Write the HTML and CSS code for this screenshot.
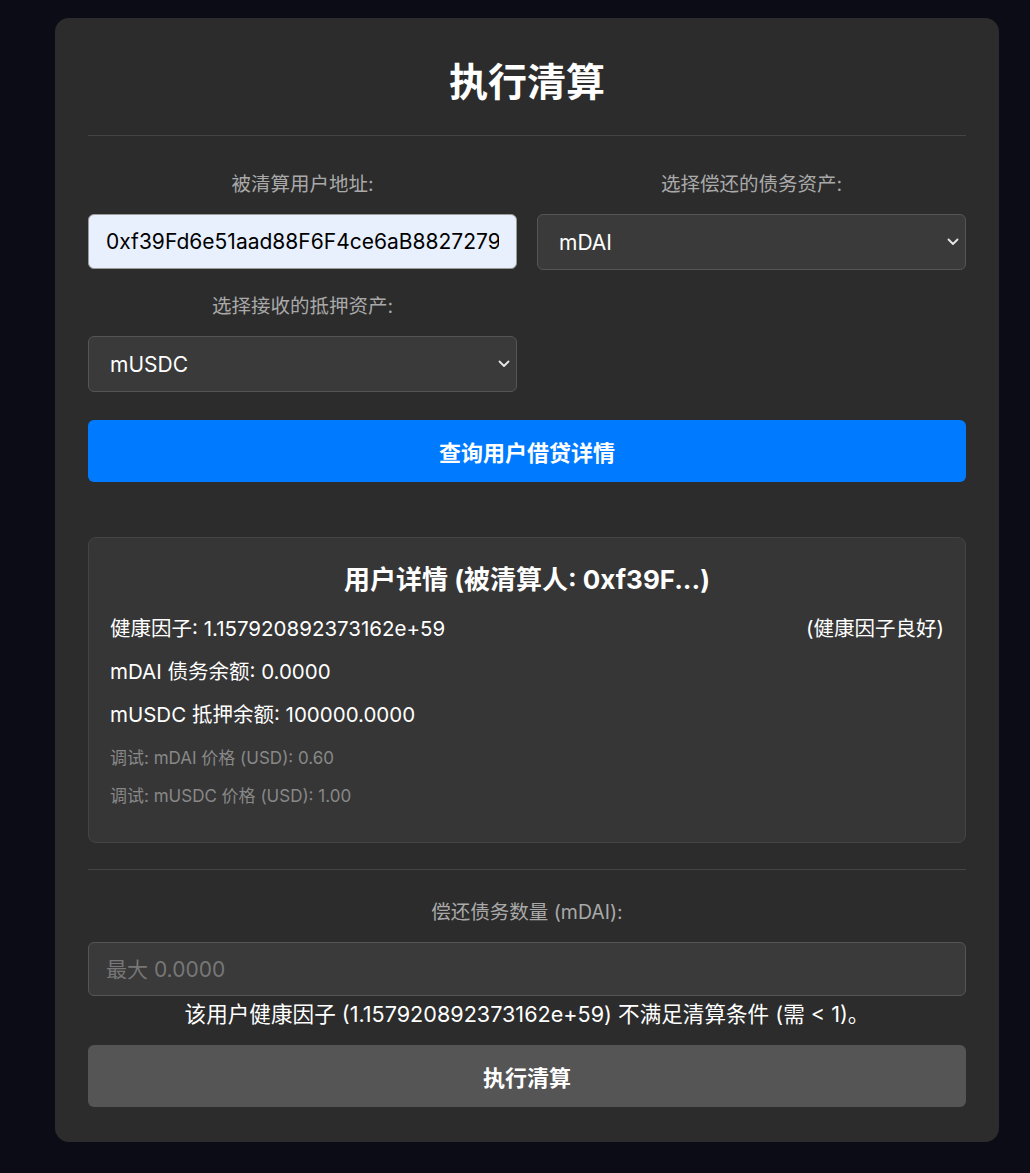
FILE: index.html
```html
<!DOCTYPE html>
<html lang="zh-CN">
<head>
<meta charset="utf-8">
<title>执行清算</title>
<link rel="stylesheet" href="styles.css">
</head>
<body>
<div class="card">
  <h1 class="title">执行清算</h1>
  <div class="form-grid">
    <div class="field">
      <label class="label">被清算用户地址:</label>
      <input class="input input-filled" type="text" value="0xf39Fd6e51aad88F6F4ce6aB8827279cffFb92266">
    </div>
    <div class="field">
      <label class="label">选择偿还的债务资产:</label>
      <div class="select-wrap">
        <select class="select"><option>mDAI</option></select>
        <svg class="chevron" width="12" height="8" viewBox="0 0 12 8"><path d="M1.5 1.5 L6 6 L10.5 1.5" fill="none" stroke="#e6e6e6" stroke-width="1.8" stroke-linecap="round" stroke-linejoin="round"/></svg>
      </div>
    </div>
    <div class="field">
      <label class="label">选择接收的抵押资产:</label>
      <div class="select-wrap">
        <select class="select"><option>mUSDC</option></select>
        <svg class="chevron" width="12" height="8" viewBox="0 0 12 8"><path d="M1.5 1.5 L6 6 L10.5 1.5" fill="none" stroke="#e6e6e6" stroke-width="1.8" stroke-linecap="round" stroke-linejoin="round"/></svg>
      </div>
    </div>
  </div>
  <button class="btn btn-primary">查询用户借贷详情</button>

  <div class="details">
    <h3 class="details-title">用户详情 (被清算人: 0xf39F...)</h3>
    <div class="row row-split"><span>健康因子: 1.157920892373162e+59</span><span>(健康因子良好)</span></div>
    <div class="row">mDAI 债务余额: 0.0000</div>
    <div class="row">mUSDC 抵押余额: 100000.0000</div>
    <div class="debug">调试: mDAI 价格 (USD): 0.60</div>
    <div class="debug">调试: mUSDC 价格 (USD): 1.00</div>
  </div>

  <div class="section">
    <label class="label">偿还债务数量 (mDAI):</label>
    <input class="input" type="text" placeholder="最大 0.0000">
    <p class="message">该用户健康因子 (1.157920892373162e+59) 不满足清算条件 (需 &lt; 1)。</p>
    <button class="btn btn-disabled">执行清算</button>
  </div>
</div>
</body>
</html>
```

FILE: styles.css
```css
html, body {
  margin: 0;
  background: #0c0c16;
}
body {
  padding: 18px 31px 31px 55px;
  font-family: Inter, "Noto Sans CJK SC", sans-serif;
  color: #fff;
}
.card {
  background: #2c2c2c;
  border-radius: 14px;
  padding: 42px 33px 35px;
}
.title {
  margin: 0;
  font-size: 39px;
  line-height: 44px;
  text-align: center;
  font-weight: 700;
  padding-bottom: 31px;
  border-bottom: 1px solid #444;
}
.form-grid {
  display: grid;
  grid-template-columns: 1fr 1fr;
  column-gap: 20px;
  row-gap: 22px;
  margin-top: 34px;
}
.field {
  display: flex;
  flex-direction: column;
}
.label {
  display: block;
  text-align: center;
  color: #a9a9a9;
  font-size: 19.5px;
  line-height: 29px;
  margin-bottom: 15px;
}
.input, .select {
  box-sizing: border-box;
  width: 100%;
  height: 55px;
  border-radius: 6px;
  border: 1px solid #555;
  background: #3a3a3a;
  color: #fff;
  font-family: Inter, "Noto Sans CJK SC", sans-serif;
  font-size: 21px;
  padding: 0 17px;
  outline: none;
}
.select-wrap {
  position: relative;
}
.select {
  display: block;
  height: 56px;
  padding: 0 40px 0 21px;
  appearance: none;
  -webkit-appearance: none;
}
.chevron {
  position: absolute;
  right: 7px;
  top: 24px;
  pointer-events: none;
}
.input-filled {
  background: #e8f0fe;
  color: #000;
  border-color: #9a9a9a;
}
.input::placeholder {
  color: #777;
}
.btn {
  display: block;
  width: 100%;
  height: 62px;
  border: none;
  border-radius: 6px;
  font-family: Inter, "Noto Sans CJK SC", sans-serif;
  font-size: 22px;
  font-weight: 700;
  color: #fff;
}
.btn-primary {
  background: #007bff;
  margin-top: 28px;
}
.btn-disabled {
  background: #555;
  margin-top: 16px;
}
.details {
  margin-top: 55px;
  background: #363636;
  border: 1px solid #444;
  border-radius: 8px;
  padding: 25px 21px 34px;
}
.details-title {
  margin: 0 0 18px;
  text-align: center;
  font-size: 26px;
  line-height: 33px;
  font-weight: 700;
}
.row {
  font-size: 20.5px;
  line-height: 30px;
  margin-bottom: 13px;
}
.row-split {
  display: flex;
  justify-content: space-between;
}
.debug {
  font-size: 17px;
  line-height: 24px;
  color: #888;
}
.row + .debug {
  margin-top: 16px;
}
.debug + .debug {
  margin-top: 14px;
}
.section {
  margin-top: 26px;
  border-top: 1px solid #444;
  padding-top: 28px;
}
.section .input {
  height: 54px;
}
.message {
  margin: 3px 0 0;
  text-align: center;
  font-size: 21.6px;
  line-height: 30px;
}
```
